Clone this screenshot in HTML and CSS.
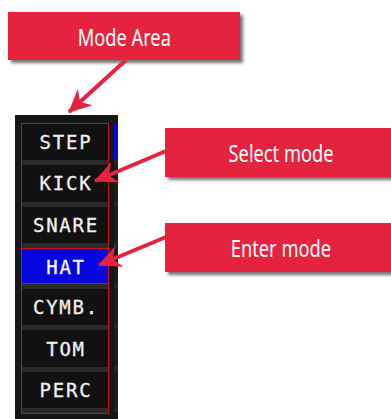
FILE: index.html
```html
<!DOCTYPE html>
<html lang="en">
<head>
  <meta charset="UTF-8">
  <title>Mode Area</title>
  <meta name="viewport" content="width=device-width, initial-scale=1">
  <link rel="stylesheet" href="styles.css">
</head>
<body>
  <div class="panel">
    <div class="modes">
      <div class="mode">STEP</div>
      <div class="mode">KICK</div>
      <div class="mode">SNARE</div>
      <div class="mode active">HAT</div>
      <div class="mode">CYMB.</div>
      <div class="mode">TOM</div>
      <div class="mode">PERC</div>
    </div>
    <div class="side">
      <div class="slot on"></div>
      <div class="slot"></div>
      <div class="slot"></div>
      <div class="slot"></div>
      <div class="slot"></div>
      <div class="slot"></div>
      <div class="slot"></div>
    </div>
  </div>

  <div class="callout area"><span>Mode Area</span></div>
  <div class="callout select"><span>Select mode</span></div>
  <div class="callout enter"><span>Enter mode</span></div>

  <svg class="arrows" width="391" height="419" viewBox="0 0 391 419">
    <defs>
      <marker id="head" markerUnits="userSpaceOnUse" markerWidth="26" markerHeight="24"
              refX="22" refY="12" orient="auto">
        <path d="M0,1 L23,12 L0,23 L7,12 z" fill="#e5233f"/>
      </marker>
    </defs>
    <line x1="126" y1="60" x2="69" y2="112" class="arrow" marker-end="url(#head)"/>
    <line x1="166" y1="151" x2="95" y2="181" class="arrow" marker-end="url(#head)"/>
    <line x1="166" y1="237" x2="99" y2="265" class="arrow" marker-end="url(#head)"/>
  </svg>
</body>
</html>
```

FILE: styles.css
```css
body {
  margin: 0;
  padding-top: 115px;
  background: #fff;
  overflow: hidden;
  height: 304px;
}
.panel {
  display: flex;
  gap: 5px;
  margin-left: 15px;
  width: 103px;
  height: 304px;
  box-sizing: border-box;
  padding: 8px 0 0 6px;
  background: #161616;
  overflow: hidden;
}
.modes {
  width: 88px;
  height: 291px;
  box-sizing: border-box;
  border: 1px solid #c8101a;
  flex-shrink: 0;
}
.mode {
  height: 41.3px;
  box-sizing: border-box;
  border-bottom: 5px solid #2a2a2a;
  background: #111;
  display: flex;
  align-items: center;
  justify-content: center;
  color: #f0f0f0;
  font-family: "DejaVu Sans Mono", monospace;
  font-size: 19px;
  letter-spacing: 1.8px;
  padding-left: 2px;
  -webkit-text-stroke: 0.3px #f0f0f0;
}
.mode.active {
  background: #0606de;
  color: #fff;
  border-top: 1px solid #d0101a;
  box-shadow: inset 0 -1px 0 #d0101a;
}
.side {
  width: 20px;
  flex-shrink: 0;
}
.slot {
  height: 41.3px;
  box-sizing: border-box;
  border-bottom: 5px solid #262626;
  background: #1c1c1c;
}
.slot.on {
  background: #0606de;
}
.callout {
  position: absolute;
  width: 232px;
  height: 48px;
  background: #e5233f;
  color: #fff;
  font-family: "Noto Sans", sans-serif;
  font-size: 24px;
  line-height: 50px;
  text-align: center;
  box-shadow: 3px 3px 3px rgba(0, 0, 0, 0.55);
}
.callout span {
  display: inline-block;
  transform: scaleX(0.76);
}
.area {
  left: 8px;
  top: 12px;
}
.select {
  left: 165px;
  top: 128px;
  height: 49px;
}
.enter {
  left: 165px;
  top: 223px;
  height: 49px;
}
.arrows {
  position: absolute;
  left: 0;
  top: 0;
}
.arrow {
  stroke: #e5233f;
  stroke-width: 4;
}
```
